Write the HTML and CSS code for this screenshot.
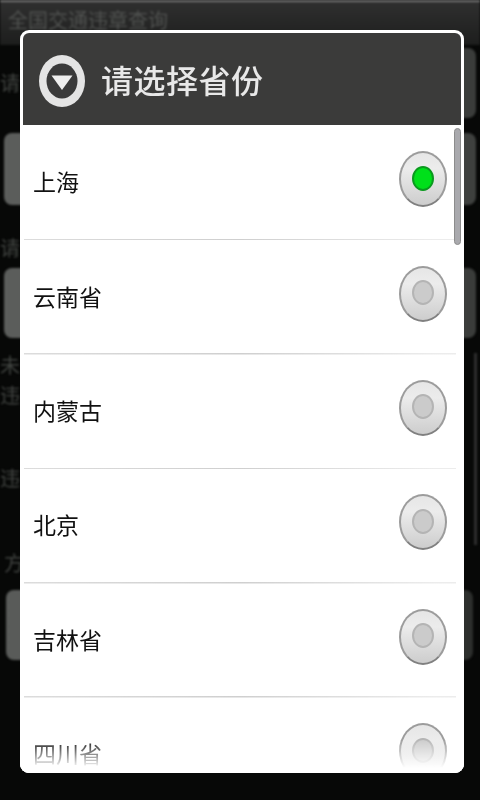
FILE: index.html
```html
<!DOCTYPE html>
<html lang="zh">
<head>
<meta charset="utf-8">
<title>全国交通违章查询</title>
<link rel="stylesheet" href="styles.css">
</head>
<body>
<div class="screen">
  <div class="app">
    <div class="app-title">全国交通违章查询</div>
    <div class="app-form">
      <div class="first-row">
        <div class="label">请</div>
        <div class="field field-top"></div>
      </div>
      <div class="field field-second"></div>
      <div class="label label-second">请</div>
      <div class="field field-third"></div>
      <div class="label label-third">未<br>违</div>
      <div class="label label-fourth">违</div>
      <div class="label label-fifth">方</div>
      <div class="field field-last"></div>
    </div>
    <div class="app-scroll"></div>
  </div>
  <div class="dialog">
    <div class="dialog-head">
      <svg class="dialog-icon" viewBox="0 0 48 54" aria-hidden="true">
        <ellipse cx="24" cy="27" rx="23" ry="26" fill="#e4e4e4"/>
        <ellipse cx="24" cy="27" rx="15.500" ry="17.500" fill="#3a3a3a"/>
        <path d="M13.500 21.500h21L24 36z" fill="#eeeeee"/>
      </svg>
      <div class="dialog-title">请选择省份</div>
    </div>
    <div class="list">
      <div class="row"><span class="name">上海</span><span class="radio radio-on"><span class="dot"></span></span></div>
      <div class="row"><span class="name">云南省</span><span class="radio"><span class="dot"></span></span></div>
      <div class="row"><span class="name">内蒙古</span><span class="radio"><span class="dot"></span></span></div>
      <div class="row"><span class="name">北京</span><span class="radio"><span class="dot"></span></span></div>
      <div class="row"><span class="name">吉林省</span><span class="radio"><span class="dot"></span></span></div>
      <div class="row"><span class="name">四川省</span><span class="radio"><span class="dot"></span></span></div>
      <div class="scrollbar"></div>
      <div class="fade"></div>
    </div>
  </div>
</div>
</body>
</html>
```
FILE: styles.css
```css
* { box-sizing: border-box; }
html, body { margin: 0; padding: 0; background: #060606; }
.screen {
  position: relative;
  width: 480px;
  height: 800px;
  overflow: hidden;
  font-family: "Noto Sans CJK SC", "Liberation Sans", sans-serif;
  background: #070807;
}
.app { height: 800px; filter: blur(0.8px); }
.app-title {
  height: 45px;
  padding: 4px 0 0 8px;
  font-size: 20px;
  line-height: 28px;
  color: #505250;
  border-top: 2px solid #777;
  background: linear-gradient(#2f2f2f, #1d1e1d);
}
.app-form {
  display: flex;
  flex-direction: column;
  padding: 3px 4px 0;
}
.first-row {
  height: 70px;
  margin-left: -4px;
  display: flex;
  align-items: center;
  gap: 30px;
}
.field { border-radius: 8px; }
.field-top {
  flex: 1;
  align-self: stretch;
  background: #3a3c3a;
}
.field-second {
  height: 72px;
  margin-top: 15px;
  background: linear-gradient(90deg, #5c5e5c, #3e403e);
}
.field-third {
  height: 70px;
  margin-top: 8px;
  background: linear-gradient(90deg, #5c5e5c, #3a3c3a);
}
.field-last {
  height: 70px;
  margin: 15px 3px 0 2px;
  background: linear-gradient(90deg, #5a5c5a, #2c2e2c);
}
.label {
  font-size: 20px;
  line-height: 24px;
  color: #404340;
}
.label-second { margin: 31px 0 0 -4px; }
.label-third { margin: 12px 0 0 -4px; line-height: 30px; }
.label-fourth { margin: 56px 0 0 -4px; }
.label-fifth { margin: 61px 0 0 0; }
.app-scroll {
  position: absolute;
  left: 474px;
  top: 353px;
  width: 3px;
  height: 192px;
  background: #2e2e2e;
}
.dialog {
  position: absolute;
  left: 20px;
  top: 30px;
  width: 444px;
  height: 743px;
  display: flex;
  flex-direction: column;
  border-radius: 9px;
  overflow: hidden;
  background: #fff;
}
.dialog-head {
  flex: none;
  height: 92px;
  margin: 3px 3px 0;
  padding-left: 15px;
  display: flex;
  align-items: center;
  gap: 15px;
  background: #3b3b3a;
  border-radius: 6px 6px 0 0;
}
.dialog-icon { flex: none; width: 48px; height: 54px; margin-top: 4px; filter: blur(0.5px); }
.dialog-title {
  font-size: 32px;
  font-weight: 500;
  line-height: 40px;
  letter-spacing: 0.5px;
  color: #e8e8e8;
  filter: blur(0.4px);
}
.list {
  position: relative;
  flex: 1;
  min-height: 0;
  padding-top: 1px;
  overflow: hidden;
  background: #fff;
}
.row {
  position: relative;
  height: 114.400px;
  padding: 0 17px 0 13px;
  display: flex;
  align-items: center;
  justify-content: space-between;
  background: linear-gradient(90deg, #dcdcdc, #cfcfcf 50%, #ececec 95%) 4px bottom / 432px 1.500px no-repeat;
}
.name {
  margin-bottom: 4px;
  font-size: 23px;
  line-height: 30px;
  color: #111;
  filter: blur(0.5px);
}
.radio {
  width: 48px;
  height: 56px;
  margin-top: -8px;
  flex: none;
  display: flex;
  align-items: center;
  justify-content: center;
  border-radius: 50%;
  border: 2px solid #9c9c9c;
  border-bottom-color: #808080;
  background: linear-gradient(#e6e6e6, #ececec 30%, #cdcdcd);
  filter: blur(0.7px);
}
.dot {
  width: 22px;
  height: 25px;
  margin-top: -2px;
  border-radius: 50%;
  background: #cbcbcb;
  border: 2px solid #b4b4b4;
}
.radio-on .dot { background: #00e01a; border-color: #0a9a1e; }
.scrollbar {
  position: absolute;
  right: 3px;
  top: 3px;
  width: 7px;
  height: 117px;
  border-radius: 4px;
  border: 1px solid #8c8c8c;
  background: #a9a9ad;
}
.fade {
  position: absolute;
  left: 0;
  right: 0;
  bottom: 0;
  height: 34px;
  background: linear-gradient(rgba(255, 255, 255, 0), #fff 85%);
}
```
